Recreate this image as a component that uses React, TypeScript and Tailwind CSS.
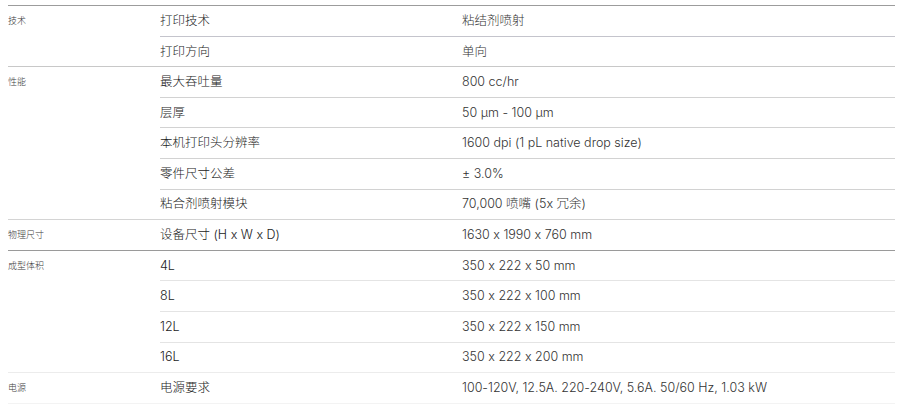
const font = { fontFamily: '"Inter", "Noto Sans CJK SC", sans-serif' };

type Group = {
	title: string;
	line: string;
	rowLine: string;
	rows: [string, string][];
};

const groups: Group[] = [
	{
		title: '技术',
		line: 'border-[#9c9c9c]',
		rowLine: 'border-[#c4c4cc]',
		rows: [
			['打印技术', '粘结剂喷射'],
			['打印方向', '单向'],
		],
	},
	{
		title: '性能',
		line: 'border-[#c8c8c8]',
		rowLine: 'border-[#d2d2d2]',
		rows: [
			['最大吞吐量', '800 cc/hr'],
			['层厚', '50 µm - 100 µm'],
			['本机打印头分辨率', '1600 dpi (1 pL native drop size)'],
			['零件尺寸公差', '± 3.0%'],
			['粘合剂喷射模块', '70,000 喷嘴 (5x 冗余)'],
		],
	},
	{
		title: '物理尺寸',
		line: 'border-[#d4d4d4]',
		rowLine: 'border-[#dcdcdc]',
		rows: [['设备尺寸 (H x W x D)', '1630 x 1990 x 760 mm']],
	},
	{
		title: '成型体积',
		line: 'border-[#9a9a9a]',
		rowLine: 'border-[#e4e4e4]',
		rows: [
			['4L', '350 x 222 x 50 mm'],
			['8L', '350 x 222 x 100 mm'],
			['12L', '350 x 222 x 150 mm'],
			['16L', '350 x 222 x 200 mm'],
		],
	},
	{
		title: '电源',
		line: 'border-[#ececec]',
		rowLine: 'border-[#eeeeee]',
		rows: [['电源要求', '100-120V, 12.5A. 220-240V, 5.6A. 50/60 Hz, 1.03 kW']],
	},
];

export default function App() {
	return (
		<div
			className="h-[406px] w-[900px] overflow-hidden bg-white pt-[5px] [font-feature-settings:'calt'_0]"
			style={font}
		>
			<div className="ml-2 mr-[5px] border-b border-[#f3f3f3]">
				{groups.map((g) => (
					<div key={g.title} className={`flex border-t ${g.line}`}>
						<div className="w-[152px] shrink-0 text-[9px] font-light leading-[29px] text-[#3a3a3a]">
							{g.title}
						</div>
						<div className="flex-1">
							{g.rows.map(([label, value], i) => (
								<div
									key={label}
									className={`flex items-center pt-px text-[12.5px] font-light ${
										i > 0 ? `h-[30.6px] border-t ${g.rowLine}` : 'h-[29.6px]'
									}`}
								>
									<div className="w-[302px] shrink-0 text-[#222]">{label}</div>
									<div className="text-[#333]">{value}</div>
								</div>
							))}
						</div>
					</div>
				))}
			</div>
		</div>
	);
}
